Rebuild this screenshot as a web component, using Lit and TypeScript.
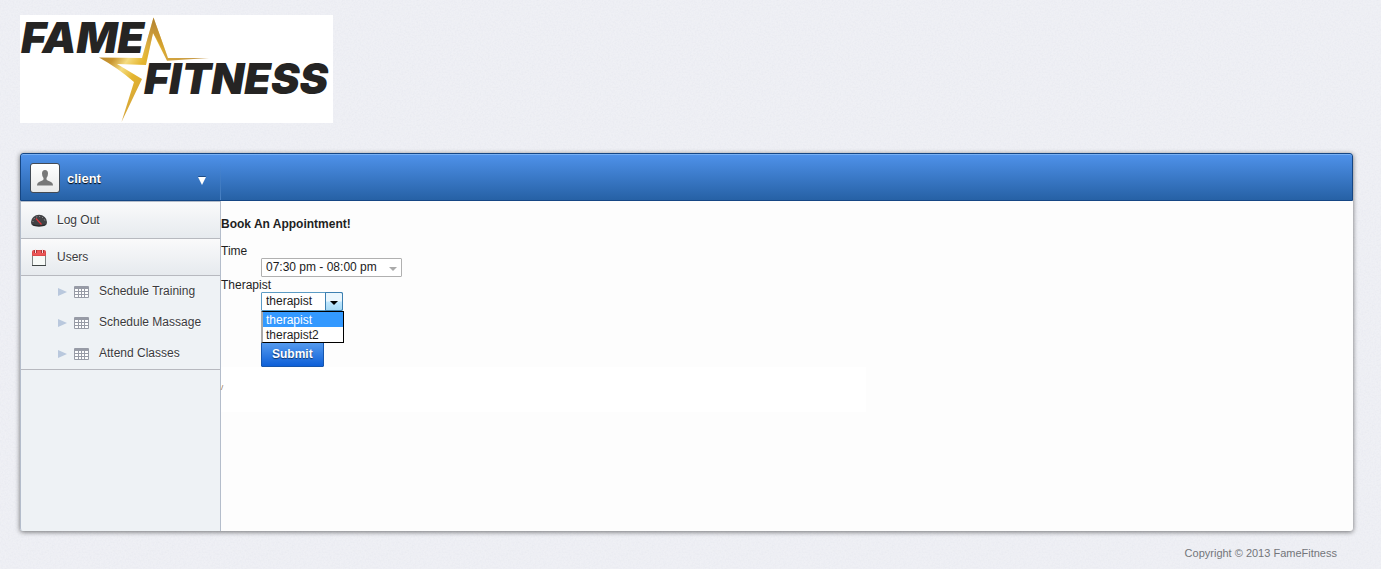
import { LitElement, html, css, svg } from "lit";
import { customElement, state } from "lit/decorators.js";

const gridIcon = svg`
  <svg class="grid-icon" viewBox="0 0 15 12" width="15" height="12" aria-hidden="true">
    <rect x="0" y="0" width="15" height="12" rx="1" fill="#979ba6"></rect>
    <g fill="#fdfefe">
      ${[3, 6, 9].map((y) => [1, 5, 8, 11].map((x) => svg`<rect x=${x} y=${y} width=${x === 1 ? 3 : x === 11 ? 3 : 2} height="2"></rect>`))}
    </g>
  </svg>`;

const gaugeIcon = svg`
  <svg viewBox="0 0 16 14" width="16" height="14" aria-hidden="true">
    <path d="M3 12 Q0 11.500 0 8 A8 7.200 0 0 1 16 8 Q16 11.500 13 12 Q8 12.800 3 12Z" fill="#424245"></path>
    <path d="M2 8 A6 5.500 0 0 1 14 8" fill="none" stroke="#a9a9ad" stroke-width="1" stroke-dasharray="1 2"></path>
    <path d="M1 10 Q8 12.500 15 10 L13 12 Q8 12.800 3 12Z" fill="#29292b"></path>
    <path d="M5 4.500 L10.500 10.500" stroke="#e4343a" stroke-width="1.200"></path>
  </svg>`;

const calendarIcon = svg`
  <svg viewBox="0 0 16 17" width="16" height="17" aria-hidden="true">
    <rect x="1.500" y="5.500" width="13" height="11" fill="#f7faf8" stroke="#7d8383"></rect>
    <path d="M1 16.500H15" stroke="#3d4444"></path>
    <path d="M1.500 2.500Q1.500 1.500 2.500 1.500H13.500Q14.500 1.500 14.500 2.500V6.500H1.500Z" fill="#ec5757" stroke="#dd4a4a"></path>
    <path d="M3.500 1V4M5.500 1V4M10.500 1V4M12.500 1V4" stroke="#a83236"></path>
    <path d="M4.500 0V4M11.500 0V4" stroke="#f9dddd"></path>
  </svg>`;

@customElement("app-root")
export class AppRoot extends LitElement {
  @state() private therapist = "therapist";

  private readonly therapists = ["therapist", "therapist2"];
  private readonly schedule = ["Schedule Training", "Schedule Massage", "Attend Classes"];

  static styles = css`
    :host {
      display: flex;
      flex-direction: column;
      box-sizing: border-box;
      min-height: 100vh;
      padding: 15px 28px 0 20px;
      color: #1f1f1f;
      background: #eff0f5
        url("data:image/svg+xml,%3Csvg xmlns='http://www.w3.org/2000/svg' width='120' height='120'%3E%3Cfilter id='n'%3E%3CfeTurbulence type='fractalNoise' baseFrequency='.6' numOctaves='2' stitchTiles='stitch'/%3E%3CfeColorMatrix values='0 0 0 0 .6 0 0 0 0 .62 0 0 0 0 .7 .3 0 0 0 -.1'/%3E%3C/filter%3E%3Crect width='120' height='120' filter='url(%23n)'/%3E%3C/svg%3E");
      font: 12px/17px "Liberation Sans", Arial, sans-serif;
    }
    .logo { display: block; align-self: flex-start; margin-bottom: 30px; overflow: visible; }
    .logo-text { font: italic 900 43px Inter, "Liberation Sans", sans-serif; fill: #252423; }
    .panel {
      flex: 1;
      display: flex;
      flex-direction: column;
      border-radius: 3px;
      background: #fdfdfd;
      box-shadow: 0 1px 5px rgba(0, 0, 0, 0.55);
    }
    .bar {
      display: flex;
      box-sizing: border-box;
      height: 48px;
      border: 1px solid #154684;
      border-radius: 3px 3px 0 0;
      background: linear-gradient(#4f92ea, #2661a5);
      box-shadow: inset 0 1px #78b0f4;
    }
    .account {
      display: flex;
      align-items: center;
      box-sizing: border-box;
      width: 200px;
      padding: 2px 14px 0 9px;
      border: 0;
      border-right: 1px solid;
      border-image: linear-gradient(transparent 20%, #4b83c5) 1;
      background: none;
      color: #fff;
      font: bold 13px/16px "Liberation Sans", Arial, sans-serif;
      text-shadow: 0 1px 1px #000;
      text-align: left;
    }
    .avatar {
      display: flex;
      align-items: center;
      justify-content: center;
      box-sizing: border-box;
      width: 30px;
      height: 30px;
      margin-right: 7px;
      border: 1px solid #434a54;
      border-radius: 3px;
      background: linear-gradient(#fff, #e9e9e9);
    }
    .name { flex: 1; padding-top: 2px; }
    .caret { margin-top: 6px; filter: drop-shadow(0 -1px #1d4c86); }
    .body { flex: 1; display: flex; }
    .side {
      box-sizing: border-box;
      width: 201px;
      border: solid #b4bdcb;
      border-width: 1px 1px 0 1px;
      border-radius: 0 0 0 3px;
      background: #eef2f5;
    }
    .top-link {
      display: flex;
      align-items: center;
      gap: 10px;
      box-sizing: border-box;
      height: 37px;
      padding-left: 10px;
      border-bottom: 1px solid #b7b9bf;
      background: linear-gradient(#fafafb, #e6eaee);
    }
    .top-link svg { margin-top: 1px; }
    .side a { color: #3a3a3d; font-size: 12px; text-decoration: none; text-shadow: 0 1px #fff; }
    .sub {
      margin: 0;
      padding: 0;
      list-style: none;
      border-bottom: 1px solid #b7b9bf;
    }
    .sub-link { display: flex; align-items: center; height: 31px; padding-left: 37px; }
    .grid-icon { margin: 0 10px 0 7px; }
    .main { flex: 1; padding-top: 15px; }
    h1 { margin: 0 0 10px; font-size: 12px; line-height: 17px; }
    form { display: flex; flex-direction: column; align-items: flex-start; }
    .field { position: relative; margin: -2px 0 0 40px; }
    select {
      display: block;
      box-sizing: border-box;
      height: 19px;
      margin: 0;
      padding: 0 20px 0 4px;
      border: 1px solid #b0b0b0;
      border-radius: 1px;
      appearance: none;
      background: #fff;
      color: #1b1b1b;
      font: 12px/17px "Liberation Sans", Arial, sans-serif;
    }
    .time { width: 141px; }
    .person { width: 82px; border-color: #5b9bc4; }
    .arrow {
      position: absolute;
      top: 0;
      right: 0;
      display: flex;
      align-items: center;
      justify-content: center;
      box-sizing: border-box;
      width: 18px;
      height: 19px;
      padding-top: 3px;
      pointer-events: none;
    }
    .arrow.open {
      border: 1px solid #3c7fb1;
      border-radius: 0 2px 2px 0;
      background: linear-gradient(#eaf6fd 45%, #bee6fd 55%, #a7d9f5);
    }
    .options {
      position: absolute;
      z-index: 1;
      top: 19px;
      left: 0;
      box-sizing: border-box;
      width: 83px;
      margin: 0;
      padding: 0;
      border: 1px solid #000;
      border-left: 2px solid #aaa;
      background: #fff;
      list-style: none;
    }
    .options li { height: 15px; padding-left: 3px; line-height: 16px; }
    .options .chosen { background: #3399ff; color: #fff; }
    .submit {
      height: 25px;
      margin: 31px 0 0 40px;
      padding: 0 10px;
      border: 1px solid #1656ad;
      border-radius: 1px;
      background: linear-gradient(#559aee, #0e60d8);
      color: #fff;
      font: bold 12px/17px "Liberation Sans", Arial, sans-serif;
      text-shadow: 0 1px 1px #103566;
    }
    .note {
      box-sizing: border-box;
      width: 57%;
      height: 45px;
      margin: 0;
      padding-top: 12px;
      background: #fff;
      color: #8a6a4a;
      font-size: 8px;
    }
    .foot { height: 38px; padding: 14px 16px 0 0; box-sizing: border-box; color: #73757a; font-size: 11px; text-align: right; }
  `;

  private pick(value: string) {
    this.therapist = value;
  }

  render() {
    return html`
      <svg class="logo" width="313" height="108" viewBox="0 0 313 108" role="img" aria-label="Fame Fitness">
        <defs>
          <linearGradient id="gold" gradientUnits="userSpaceOnUse" x1="80" y1="20" x2="160" y2="75">
            <stop offset="0" stop-color="#ad7a2c"></stop>
            <stop offset="0.250" stop-color="#c8952f"></stop>
            <stop offset="0.380" stop-color="#f5dc80"></stop>
            <stop offset="0.520" stop-color="#e4b52e"></stop>
            <stop offset="0.700" stop-color="#d5a53a"></stop>
            <stop offset="1" stop-color="#c59a4c"></stop>
          </linearGradient>
          <linearGradient id="tip" gradientUnits="userSpaceOnUse" x1="0" y1="0" x2="0" y2="45">
            <stop offset="0" stop-color="#a87828"></stop>
            <stop offset="0.500" stop-color="#c08a2c" stop-opacity="0.700"></stop>
            <stop offset="1" stop-color="#d0a030" stop-opacity="0"></stop>
          </linearGradient>
        </defs>
        <rect width="313" height="108" fill="#fff"></rect>
        <text class="logo-text" x="1" y="38">FAME</text>
        <path d="M133.500 2.500L148 43L189 43L147 45.800L133 18L126 50L97 49L122 64L101.500 107L114 67Q98 53 79 42.500L122 43Z" fill="url(#gold)"></path>
        <path d="M133.500 2.500L148 43L133 18L126 50L122 43Z" fill="url(#tip)"></path>
        <text class="logo-text" x="124" y="79">FITNESS</text>
      </svg>

      <div class="panel">
        <header class="bar">
          <button class="account" type="button">
            <span class="avatar">
              <svg width="16" height="16" viewBox="0 0 16 16" aria-hidden="true">
                <path d="M5 3.500Q5 0 8 0Q11 0 11 3.500Q11 6.500 9.500 8V9.500Q10 10.500 13 11.500Q16 12.500 16 15.500H0Q0 12.500 3 11.500Q6 10.500 6.500 9.500V8Q5 6.500 5 3.500Z" fill="#777"></path>
              </svg>
            </span>
            <span class="name">client</span>
            <svg class="caret" width="8" height="8" viewBox="0 0 8 8" aria-hidden="true"><path d="M0 0H8L4 8Z" fill="#fff"></path></svg>
          </button>
        </header>
        <div class="body">
          <nav class="side">
            <a class="top-link" href="#logout">${gaugeIcon}Log Out</a>
            <a class="top-link" href="#users">${calendarIcon}Users</a>
            <ul class="sub">
              ${this.schedule.map(
                (label) => html`<li>
                  <a class="sub-link" href="#schedule">
                    <svg width="9" height="8" viewBox="0 0 9 8" aria-hidden="true"><path d="M0 0L9 4L0 8Z" fill="#b9c8dd"></path></svg>
                    ${gridIcon}${label}
                  </a>
                </li>`
              )}
            </ul>
          </nav>
          <main class="main">
            <h1>Book An Appointment!</h1>
            <form @submit=${(e: Event) => e.preventDefault()}>
              <label for="time">Time</label>
              <div class="field">
                <select id="time" class="time"><option>07:30 pm - 08:00 pm</option></select>
                <span class="arrow"><svg width="8" height="4" viewBox="0 0 8 4"><path d="M0 0H8L4 4Z" fill="#aaa"></path></svg></span>
              </div>
              <label for="person">Therapist</label>
              <div class="field">
                <select id="person" class="person" .value=${this.therapist}
                  @change=${(e: Event) => this.pick((e.target as HTMLSelectElement).value)}>
                  ${this.therapists.map((t) => html`<option>${t}</option>`)}
                </select>
                <span class="arrow open"><svg width="8" height="4" viewBox="0 0 8 4"><path d="M0 0H8L4 4Z" fill="#000"></path></svg></span>
                <ul class="options" role="listbox" aria-label="Therapist">
                  ${this.therapists.map(
                    (t) => html`<li role="option" class=${t === this.therapist ? "chosen" : ""}
                      aria-selected=${t === this.therapist} @click=${() => this.pick(t)}>${t}</li>`
                  )}
                </ul>
              </div>
              <button class="submit" type="submit">Submit</button>
            </form>
            <p class="note">/</p>
          </main>
        </div>
      </div>
      <footer class="foot">Copyright © 2013 FameFitness</footer>
    `;
  }
}
